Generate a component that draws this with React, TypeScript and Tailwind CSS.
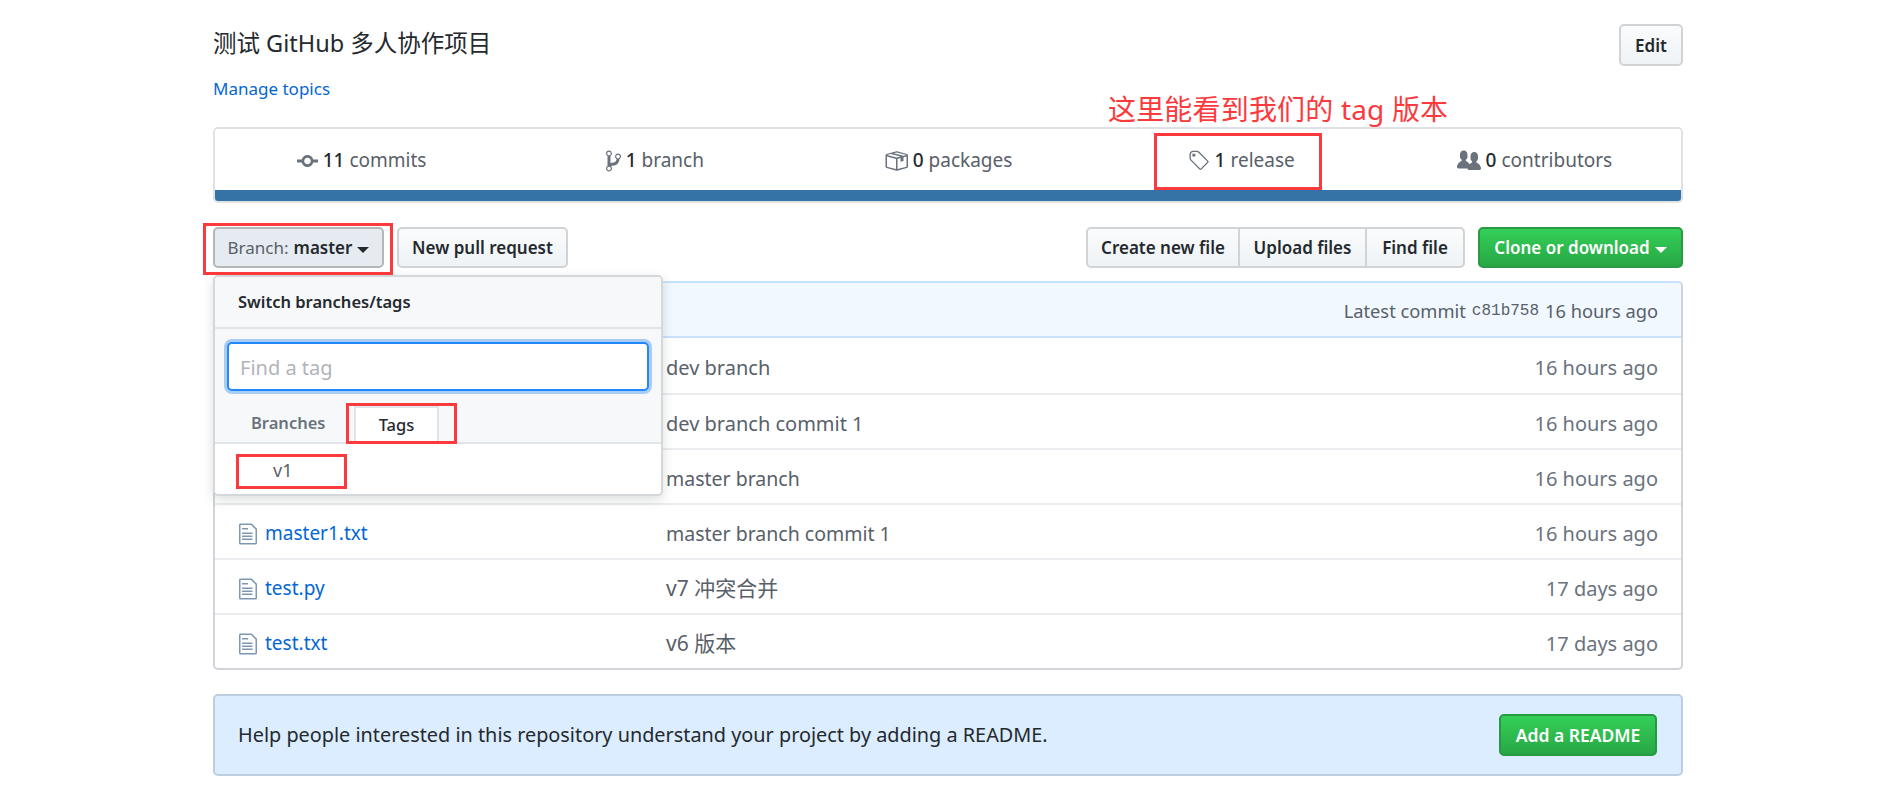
const FONT = "font-['Noto_Sans','Noto_Sans_CJK_SC',sans-serif]";

function CommitIcon() {
  return (
    <svg viewBox="0 0 14 16" className="w-[21px] h-[24px] fill-[#6a737d]">
      <path d="M10.86 7c-.45-1.72-2-3-3.86-3-1.86 0-3.41 1.28-3.86 3H0v2h3.14c.45 1.72 2 3 3.86 3 1.86 0 3.41-1.28 3.86-3H14V7h-3.14zM7 10.2c-1.22 0-2.2-.98-2.2-2.2 0-1.22.98-2.2 2.2-2.2 1.22 0 2.2.98 2.2 2.2 0 1.22-.98 2.2-2.2 2.2z" />
    </svg>
  );
}

function BranchIcon() {
  return (
    <svg viewBox="0 0 10 16" className="w-[15px] h-[24px] fill-[#6a737d]">
      <path d="M10 5c0-1.11-.89-2-2-2a1.993 1.993 0 0 0-1 3.72v.3c-.02.52-.23.98-.63 1.38-.4.4-.86.61-1.38.63-.83.02-1.48.16-2 .45V4.72a1.993 1.993 0 0 0-1-3.72C.88 1 0 1.89 0 3a2 2 0 0 0 1 1.72v6.56c-.59.35-1 .99-1 1.72 0 1.11.89 2 2 2 1.11 0 2-.89 2-2 0-.53-.2-1-.53-1.36.09-.06.48-.41.59-.47.25-.11.56-.17.94-.17 1.05-.05 1.95-.45 2.75-1.25S8.95 7.77 9 6.73h-.02C9.59 6.37 10 5.73 10 5zM2 1.8c.66 0 1.2.55 1.2 1.2 0 .65-.55 1.2-1.2 1.2C1.35 4.2.8 3.65.8 3c0-.65.55-1.2 1.2-1.2zm0 12.41c-.66 0-1.2-.55-1.2-1.2 0-.65.55-1.2 1.2-1.2.65 0 1.2.55 1.2 1.2 0 .65-.55 1.2-1.2 1.2zm6-8c-.66 0-1.2-.55-1.2-1.2 0-.65.55-1.2 1.2-1.2.65 0 1.2.55 1.2 1.2 0 .65-.55 1.2-1.2 1.2z" />
    </svg>
  );
}

function PackageIcon() {
  return (
    <svg viewBox="0 0 16 16" className="w-[24px] h-[24px] fill-[#6a737d]">
      <path d="M1 4.27v7.47c0 .45.3.84.75.97l6.5 1.73c.16.05.34.05.5 0l6.5-1.73c.45-.13.75-.52.75-.97V4.27c0-.45-.3-.84-.75-.97l-6.5-1.74a1.4 1.4 0 0 0-.5 0L1.75 3.3c-.45.13-.75.52-.75.97zm7 9.09l-6-1.59V5l6 1.61v6.75zM2 4l2.5-.67L11 5.06l-2.5.67L2 4zm13 7.77l-6 1.59V6.61l2-.55V8.5l2-.53V5.53L15 5v6.77zm-2-7.24L6.5 2.8l2-.53L15 4l-2 .53z" />
    </svg>
  );
}

function TagIcon() {
  return (
    <svg viewBox="0 0 15 16" className="w-[22px] h-[24px] fill-[#6a737d]">
      <path d="M7.73 1.73C7.26 1.26 6.62 1 5.96 1H3.5C2.13 1 1 2.13 1 3.5v2.47c0 .66.27 1.3.73 1.77l6.06 6.06c.39.39 1.02.39 1.41 0l4.59-4.59a.996.996 0 0 0 0-1.41L7.73 1.73zM2.38 7.09c-.31-.3-.47-.7-.47-1.13V3.5c0-.88.72-1.59 1.59-1.59h2.47c.42 0 .83.16 1.13.47l6.14 6.13-4.73 4.73-6.13-6.15zM3.01 3h2v2H3V3h.01z" />
    </svg>
  );
}

function PeopleIcon() {
  return (
    <svg viewBox="0 0 16 16" className="w-[24px] h-[24px] fill-[#6a737d]">
      <path d="M16 12.999c0 .439-.45 1-1 1H7.995c-.539 0-.994-.447-.995-.999H1c-.54 0-1-.561-1-1 0-2.634 3-4 3-4s.229-.409 0-1c-.841-.621-1.058-.59-1-3 .058-2.419 1.367-3 2.5-3s2.442.58 2.5 3c.058 2.41-.159 2.379-1 3-.229.59 0 1 0 1s1.549.711 2.42 2.088C9.196 9.369 10 8.999 10 8.999s.229-.409 0-1c-.841-.62-1.058-.59-1-3 .058-2.419 1.367-3 2.5-3s2.437.581 2.495 3c.059 2.41-.158 2.38-1 3-.229.59 0 1 0 1s3.005 1.366 3.005 4z" />
    </svg>
  );
}

function FileIcon() {
  return (
    <svg viewBox="0 0 12 16" className="w-[18px] h-[24px] fill-[#7f97b1]">
      <path d="M6 5H2V4h4v1zM2 8h7V7H2v1zm0 2h7V9H2v1zm0 2h7v-1H2v1zm10-7.5V14c0 .55-.45 1-1 1H1c-.55 0-1-.45-1-1V2c0-.55.45-1 1-1h7.5L12 4.5zM11 5L8 2H1v12h10V5z" />
    </svg>
  );
}

function Caret({ color }: { color: string }) {
  return <span className={`ml-[5px] mt-[3px] w-0 h-0 border-x-[6px] border-x-transparent border-t-[6px] ${color}`} />;
}

function Stat({ icon, count, label }: { icon: React.ReactNode; count: string; label: string }) {
  return (
    <div className="flex items-center justify-center text-[19px] text-[#586069]">
      {icon}
      <span className="ml-[5px] font-medium text-[#24292e]">{count}</span>
      <span className="ml-[5px]">{label}</span>
    </div>
  );
}

const rows = [
  { name: "", message: "dev branch", age: "16 hours ago", size: "text-[20px]" },
  { name: "", message: "dev branch commit 1", age: "16 hours ago", size: "text-[20px]" },
  { name: "", message: "master branch", age: "16 hours ago", size: "text-[19.5px]" },
  { name: "master1.txt", message: "master branch commit 1", age: "16 hours ago", size: "text-[19.5px]" },
  { name: "test.py", message: "v7 冲突合并", age: "17 days ago", size: "text-[21px]" },
  { name: "test.txt", message: "v6 版本", age: "17 days ago", size: "text-[21px]" },
];

const btn = "h-full flex items-center justify-center pt-[1px] border-2 border-[#d1d3d5] bg-gradient-to-b from-[#fafbfc] to-[#eff3f6] text-[17px] font-semibold text-[#24292e]";

export default function App() {
  return (
    <div className={`relative h-[791px] overflow-hidden bg-white pl-[213px] pt-[24px] ${FONT}`}>
      <div className="w-[1470px]">
        {/* Title */}
        <div className="flex justify-between items-center h-[42px]">
          <h1 className="-mt-[2px] text-[23.5px] text-[#24292e]">测试 GitHub 多人协作项目</h1>
          <button className={`${btn} w-[64px] rounded-[5px]`}>Edit</button>
        </div>
        <a className="block mt-[9px] h-[28px] leading-[28px] text-[17px] text-[#0366d6]">Manage topics</a>

        {/* Numbers summary */}
        <div className="mt-[24px] h-[76px] flex flex-col border-2 border-[#dfe2e5] rounded-[5px] overflow-hidden">
          <div className="flex-1 grid grid-cols-5 items-center pt-[2px]">
            <Stat icon={<CommitIcon />} count="11" label="commits" />
            <Stat icon={<BranchIcon />} count="1" label="branch" />
            <Stat icon={<PackageIcon />} count="0" label="packages" />
            <Stat icon={<TagIcon />} count="1" label="release" />
            <Stat icon={<PeopleIcon />} count="0" label="contributors" />
          </div>
          <div className="h-[11px] bg-[#3572a5]" />
        </div>

        {/* Toolbar */}
        <div className="relative mt-[24px] h-[41px] flex items-center justify-between">
          <div className="h-full flex gap-[13px]">
            <button className="h-full w-[171px] flex items-center justify-center pt-[1px] rounded-[5px] border-2 border-[#b4b6b8] bg-[#e6ebf1] text-[17px] text-[#586069]">
              Branch:<span className="ml-[5px] font-semibold text-[#24292e]">master</span>
              <Caret color="border-t-[#24292e]" />
            </button>
            <button className={`${btn} w-[171px] rounded-[5px]`}>New pull request</button>
          </div>
          <div className="h-full flex gap-[13px]">
            <div className="h-full flex">
              <button className={`${btn} w-[154px] rounded-l-[5px]`}>Create new file</button>
              <button className={`${btn} w-[129px] -ml-[2px]`}>Upload files</button>
              <button className={`${btn} w-[100px] -ml-[2px] rounded-r-[5px]`}>Find file</button>
            </div>
            <button className="h-full w-[205px] flex items-center justify-center pt-[1px] rounded-[5px] border-2 border-[#2a9a45] bg-gradient-to-b from-[#34d058] to-[#28a745] text-[17px] font-semibold text-white">
              Clone or download
              <Caret color="border-t-white" />
            </button>
          </div>

          {/* Branch dropdown */}
          <div className="absolute z-10 left-0 top-[48px] w-[450px] h-[221px] flex flex-col rounded-[5px] border-2 border-[#d5d8db] bg-white shadow-[0_4px_12px_rgba(27,31,35,0.15)] overflow-hidden">
            <div className="h-[52px] shrink-0 flex items-center pl-[23px] bg-[#f6f8fa] border-b-2 border-[#e1e4e8] text-[16.5px] font-semibold text-[#24292e]">
              Switch branches/tags
            </div>
            <div className="bg-[#f6f8fa] h-[115px] shrink-0 flex flex-col">
              <div className="mx-[12px] mt-[13px] h-[49px] flex items-center rounded-[5px] border-2 border-[#2188ff] bg-white pl-[11px] pt-[2px] shadow-[0_0_0_3px_#a9ccf5] text-[20px] text-[#b0b4b9]">
                Find a tag
              </div>
              <div className="flex-1 flex items-end border-b-2 border-[#e1e4e8] pl-[22px]">
                <span className="h-[37px] w-[117px] flex items-center text-[16.5px] font-semibold text-[#6a737d] pl-[14px]">Branches</span>
                <span className="h-[38px] w-[85px] flex items-center justify-center pb-[2px] -mb-[2px] border-x-2 border-t-2 border-[#e1e4e8] bg-white text-[16.5px] font-medium text-[#24292e]">Tags</span>
              </div>
            </div>
            <div className="flex-1 pl-[58px] pt-[13px] text-[18px] leading-[26px] text-[#586069]">v1</div>
          </div>
        </div>

        {/* File table */}
        <div className="mt-[13px] rounded-[5px] border-2 border-t-0 border-[#d1d5da] overflow-hidden">
          <div className="h-[57px] -mx-[2px] flex items-center justify-end pr-[23px] pt-[2px] bg-[#f1f8ff] border-2 border-[#c8e1ff] rounded-t-[5px] text-[18.3px] text-[#586069]">
            Latest commit
            <code className="mx-[6px] font-['Liberation_Mono',monospace] text-[16px]">c81b758</code>
            16 hours ago
          </div>
          {rows.map((row, i) => (
            <div key={i} className={`h-[55px] flex items-center pt-[4px] ${i > 0 ? "border-t-2 border-[#eaecef]" : ""}`}>
              <div className="w-[451px] shrink-0 flex items-center pl-[24px] gap-[8px]">
                <FileIcon />
                <a className="text-[19px] text-[#0366d6]">{row.name}</a>
              </div>
              <div className={`flex-1 text-[#586069] ${row.size}`}>{row.message}</div>
              <div className="pr-[23px] text-[20px] text-[#6a737d]">{row.age}</div>
            </div>
          ))}
        </div>

        {/* README prompt */}
        <div className="mt-[24px] h-[82px] flex items-center justify-between pl-[23px] pr-[24px] rounded-[5px] border-2 border-[#bccfe0] bg-[#dbedff] text-[19.85px] text-[#24292e]">
          <span>Help people interested in this repository understand your project by adding a README.</span>
          <button className="h-[42px] w-[158px] flex items-center justify-center rounded-[5px] border-2 border-[#259a41] bg-gradient-to-b from-[#34d058] to-[#28a745] text-[17.5px] font-semibold text-white">
            Add a README
          </button>
        </div>
      </div>

      {/* Red annotations */}
      <div className="absolute z-20 left-[1108px] top-[88px] text-[28px] tracking-[0.18px] leading-[42px] text-[#fb3a3e] whitespace-nowrap">这里能看到我们的 tag 版本</div>
      <div className="absolute z-20 left-[1154px] top-[133px] w-[168px] h-[57px] border-[3px] border-[#fb3a3e]" />
      <div className="absolute z-20 left-[203px] top-[223px] w-[190px] h-[52px] border-[3px] border-[#fb3a3e]" />
      <div className="absolute z-20 left-[346px] top-[403px] w-[111px] h-[41px] border-[3px] border-[#fb3a3e]" />
      <div className="absolute z-20 left-[236px] top-[454px] w-[111px] h-[35px] border-[3px] border-[#fb3a3e]" />
    </div>
  );
}
